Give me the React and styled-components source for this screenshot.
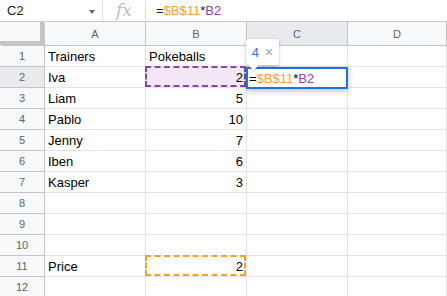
import React from "react";
import styled, { createGlobalStyle } from "styled-components";

const Global = createGlobalStyle`
  html, body { margin: 0; padding: 0; background: #fff; }
  body { width: 447px; height: 296px; overflow: hidden; font-family: "Liberation Sans", Arial, sans-serif; }
`;

const ORANGE = "#f6a033";
const PURPLE = "#8e44ad";
const BLUE = "#1a73e8";

const Page = styled.div`
  width: 447px;
  height: 296px;
  overflow: hidden;
  position: relative;
`;

const FormulaBar = styled.div`
  display: flex;
  align-items: center;
  height: 21px;
  border-bottom: 1px solid #c7c7c7;
`;

const NameBox = styled.div`
  width: 102px;
  box-sizing: border-box;
  padding-left: 7px;
  padding-right: 7px;
  display: flex;
  align-items: center;
  justify-content: space-between;
  font-size: 13px;
  color: #202124;
`;

const Caret = styled.span`
  width: 0;
  height: 0;
  border-left: 3.5px solid transparent;
  border-right: 3.5px solid transparent;
  border-top: 4px solid #666;
  margin-top: 2px;
`;

const Divider = styled.div`
  width: 1px;
  height: 21px;
  background: #e0e0e0;
`;

const Fx = styled.div`
  width: 42px;
  text-align: center;
  font-family: "DejaVu Serif", "Liberation Serif", serif;
  font-style: italic;
  font-size: 17px;
  color: #bdbdbd;
  line-height: 21px;
`;

const Formula = styled.div`
  padding-left: 10px;
  font-size: 13px;
  color: #202124;
`;

const Ref = styled.span`
  color: ${(p) => p.$color};
`;

const Grid = styled.div`
  display: grid;
  grid-template-columns: 45px 101px 101px 101px 99px;
  grid-template-rows: 24px repeat(12, 21px);
  position: relative;
`;

const Corner = styled.div`
  background: #f8f9fa;
  border-right: 4px solid #c4c4c4;
  border-bottom: 4px solid #c4c4c4;
  box-sizing: border-box;
  margin-right: 1px;
  margin-bottom: 1px;
  box-shadow: 1px 1px 0 #c4c4c4;
`;

const ColHead = styled.div`
  background: ${(p) => (p.$active ? "#e8eaed" : "#f8f9fa")};
  border-right: 1px solid #c4c4c4;
  border-bottom: 1px solid #c4c4c4;
  box-sizing: border-box;
  display: flex;
  align-items: center;
  justify-content: center;
  font-size: 11px;
  color: #5f6368;
`;

const RowHead = styled.div`
  background: ${(p) => (p.$active ? "#e8eaed" : "#f8f9fa")};
  border-right: 1px solid #c4c4c4;
  border-bottom: 1px solid #c4c4c4;
  box-sizing: border-box;
  display: flex;
  align-items: center;
  justify-content: center;
  font-size: 11px;
  color: #5f6368;
`;

const Cell = styled.div`
  border-right: 1px solid #e2e3e3;
  border-bottom: 1px solid #e2e3e3;
  box-sizing: border-box;
  display: flex;
  align-items: flex-end;
  justify-content: ${(p) => (p.$num ? "flex-end" : "flex-start")};
  padding: 0 3px 2px 3px;
  font-size: 13px;
  color: #000;
  position: relative;
  background: ${(p) => p.$bg || "#fff"};
`;

const RefBox = styled.div`
  position: absolute;
  left: -1px;
  top: -1px;
  right: 0;
  bottom: 0;
  border: 2px dashed ${(p) => p.$color};
`;

const EditBox = styled.div`
  position: absolute;
  left: 246px;
  top: 45px;
  width: 102px;
  height: 22px;
  box-sizing: border-box;
  border: 2px solid ${BLUE};
  background: #fff;
  box-shadow: 0 2px 6px rgba(0, 0, 0, 0.25);
  font-size: 13px;
  padding: 2px 0 0 1px;
  color: #000;
  white-space: nowrap;
  z-index: 2;
`;

const Tip = styled.div`
  position: absolute;
  left: 246px;
  top: 17px;
  width: 33px;
  height: 26px;
  background: #fff;
  box-shadow: 0 1px 3px rgba(0, 0, 0, 0.3);
  border-radius: 2px;
  display: flex;
  align-items: center;
  justify-content: center;
  gap: 6px;
  font-size: 13px;
  z-index: 3;
  &::after {
    content: "";
    position: absolute;
    left: 4px;
    bottom: -4px;
    width: 7px;
    height: 7px;
    background: #fff;
    transform: rotate(45deg);
    box-shadow: 1px 1px 1px rgba(0, 0, 0, 0.15);
  }
`;

const TipNum = styled.span`
  color: ${BLUE};
`;

const TipX = styled.span`
  color: #9aa0a6;
  font-size: 14px;
`;

const data = {
  1: ["Trainers", "Pokeballs"],
  2: ["Iva", 2],
  3: ["Liam", 5],
  4: ["Pablo", 10],
  5: ["Jenny", 7],
  6: ["Iben", 6],
  7: ["Kasper", 3],
  11: ["Price", 2],
};

export default function App() {
  const rows = [];
  for (let r = 1; r <= 12; r++) {
    const d = data[r] || [];
    const b = d[1];
    const isNum = typeof b === "number";
    rows.push(
      <React.Fragment key={r}>
        <RowHead $active={r === 2}>{r}</RowHead>
        <Cell>{d[0] || ""}</Cell>
        <Cell $num={isNum} $bg={r === 2 ? "#f3e8f7" : undefined}>
          {b !== undefined ? b : ""}
          {r === 2 && <RefBox $color={PURPLE} />}
          {r === 11 && <RefBox $color={ORANGE} />}
        </Cell>
        <Cell />
        <Cell />
      </React.Fragment>
    );
  }
  return (
    <Page>
      <Global />
      <FormulaBar>
        <NameBox>
          C2
          <Caret />
        </NameBox>
        <Divider />
        <Fx>fx</Fx>
        <Divider />
        <Formula>
          =<Ref $color={ORANGE}>$B$11</Ref>*<Ref $color={PURPLE}>B2</Ref>
        </Formula>
      </FormulaBar>
      <Grid>
        <Corner />
        <ColHead>A</ColHead>
        <ColHead>B</ColHead>
        <ColHead $active>C</ColHead>
        <ColHead>D</ColHead>
        {rows}
        <Tip>
          <TipNum>4</TipNum>
          <TipX>×</TipX>
        </Tip>
        <EditBox>
          =<Ref $color={ORANGE}>$B$11</Ref>*<Ref $color={PURPLE}>B2</Ref>
        </EditBox>
      </Grid>
    </Page>
  );
}
